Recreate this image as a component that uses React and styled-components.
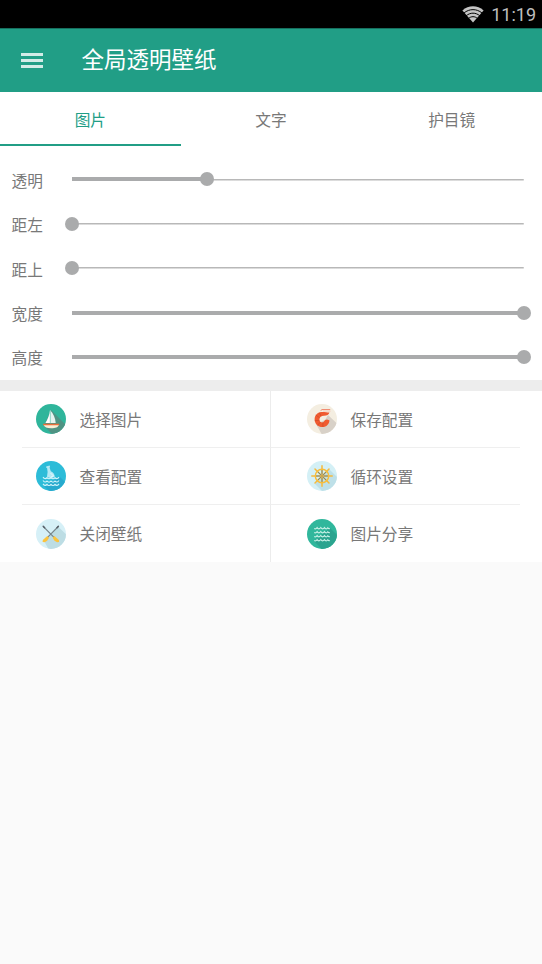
import React from "react"
import styled, { createGlobalStyle } from "styled-components"

const sliders = [
  { label: "透明", value: 30 },
  { label: "距左", value: 0 },
  { label: "距上", value: 0 },
  { label: "宽度", value: 100 },
  { label: "高度", value: 100 },
]

const tabs = ["图片", "文字", "护目镜"]

// round badge with the long diagonal shadow clipped to the disc
const Badge = ({ id, color, shadow, shade, children }) => (
  <svg width="30" height="30" viewBox="0 0 30 30">
    <clipPath id={id}>
      <circle cx="15" cy="15" r="15" />
    </clipPath>
    <g clipPath={`url(#${id})`}>
      <rect width="30" height="30" fill={color} />
      <path d={shadow} fill={shade} />
    </g>
    {children}
  </svg>
)

const BoatIcon = () => (
  <Badge id="boat" color="#2fb59b" shade="#4f9383" shadow="M15 6 L34 25 V34 H20 L8 22 Z">
    <path d="M14 6.2 V19 H9.4 C11.8 15 13.4 11 14 6.2Z" fill="#fff" />
    <path d="M14 6 C17.4 9.5 19.3 14 19.7 19 H14Z" fill="#e6f3ef" />
    <path d="M14.3 6 V19.5" stroke="#67c5b2" strokeWidth="0.7" />
    <path d="M7.5 20.5 H23 C22.3 23.3 19.5 24.3 15.2 24.3 C11 24.3 8.3 23.3 7.5 20.5Z" fill="#f8eed5" />
    <rect x="7" y="19.8" width="16.2" height="1.4" rx="0.4" fill="#e96f3b" />
  </Badge>
)

const BottleIcon = () => (
  <Badge id="bottle" color="#2dbcd8" shade="#28aace" shadow="M24 16 L36 28 V36 H19 L8 25Z">
    <path
      d="M10.1 5.4 L13.7 4.5 L14.1 6.1 L13.5 6.6 L14.8 10.2 C17.4 11.1 18.6 13.3 18.8 15.8 C16.4 17.4 13.6 17.4 11 15.8 L11.6 10.9 L11.1 7.1 L10.4 6.9Z"
      fill="#b4e9f5"
    />
    <path d="M14.5 12 L17.5 15 L14.8 16" stroke="#e3f8fc" strokeWidth="1" fill="none" />
    {[16.6, 20, 23.4].map(y => (
      <path
        key={y}
        d={`M7 ${y - 0.5} Q9 ${y + 2.2} 11 ${y} Q13 ${y + 2.2} 15 ${y} Q17 ${y + 2.2} 19 ${y} Q21 ${y + 2.2} 23 ${y - 0.5}`}
        stroke="#d5f5fb"
        strokeWidth="1.1"
        fill="none"
      />
    ))}
  </Badge>
)

const OarsIcon = () => (
  <Badge id="oars" color="#d6f0f7" shade="#bddde4" shadow="M22 7.5 L38 23 V38 H17 L8 22 L15 15Z">
    <path d="M7.3 7.5 L18.5 18.8 M22.3 7.5 L11 18.8" stroke="#77858b" strokeWidth="1.1" />
    <path
      d="M7.2 7.3 L8.6 8.7 M22.4 7.3 L21 8.7"
      stroke="#555d66"
      strokeWidth="1.5"
      strokeLinecap="round"
    />
    <path d="M18.4 17 L22.9 20.9 L23.1 22.9 L21.1 23.2 L18.5 21.8 L16.7 18.7Z" fill="#fbc33d" />
    <path d="M11.3 17 L6.8 20.9 L6.6 22.9 L8.7 23.2 L11.2 21.8 L13 18.7Z" fill="#fbc33d" />
  </Badge>
)

const ShrimpIcon = () => (
  <Badge id="shrimp" color="#f4eee1" shade="#d8d1c8" shadow="M21 11 L36 25 V36 H18 L9 20 L18 16Z">
    <path
      d="M22.4 8.6 C21.8 10.8 20 11.8 17 11.8 C14.2 11.9 12.4 13.4 12.4 15.4 C12.4 17.6 14.2 18.7 16.2 18.3 L18.2 15.9 L20 15.4 L22.4 16.2 C22.4 20 19.4 23 15.6 23 C10.8 23 7.6 19.7 7.6 15.2 C7.6 10.6 11 7.9 15.4 7.9 C18.2 7.9 20.4 8.1 22.4 8.6Z"
      fill="#f05b30"
    />
    <path
      d="M12.4 8.6 L14 12.2 M8.8 11 L12.6 13.8 M7.8 16.6 L12.4 16.4 M10.6 21.4 L13.4 18 M15.8 22.8 L16 18.4"
      stroke="#cf4a28"
      strokeWidth="0.7"
    />
    <path d="M13.6 6.6 L15 5.6 H23.2" stroke="#f0785a" strokeWidth="0.9" fill="none" />
    <path d="M16 7.2 H23.6" stroke="#f7c8b6" strokeWidth="0.8" />
  </Badge>
)

const WheelIcon = () => (
  <Badge id="wheel" color="#d4f0f6" shade="#bee0e8" shadow="M22 8 L38 24 V38 H23 L8 23Z">
    <path
      d="M15 4.8 V25.2 M4.8 15 H25.2 M8 8 L22 22 M22 8 L8 22"
      stroke="#f5b93c"
      strokeWidth="1.5"
      strokeLinecap="round"
    />
    <path
      d="M15 9 V21 M9 15 H21 M10.8 10.8 L19.2 19.2 M19.2 10.8 L10.8 19.2"
      stroke="#71878d"
      strokeWidth="1"
    />
    <circle cx="15" cy="15" r="6.7" stroke="#f8bd3b" strokeWidth="1.4" fill="none" />
    <circle cx="15" cy="15" r="1.7" fill="#f4bd47" />
    <circle cx="15" cy="15" r="0.7" fill="#7b7a68" />
  </Badge>
)

const WavesIcon = () => (
  <Badge id="waves" color="#30b79c" shade="#2ba48f" shadow="M23 9 L38 24 V38 H22 L7 22Z">
    {[9, 13, 17, 21].map(y => (
      <path
        key={y}
        d={`M7.2 ${y + 0.5} Q8.9 ${y + 1.6} 10.1 ${y - 0.5} Q11.7 ${y + 2.2} 13.8 ${y - 0.5} Q15.5 ${y + 2.2} 17.5 ${y - 0.5} Q19.1 ${y + 2.2} 20.8 ${y - 0.3} Q21.5 ${y + 1} 22.8 ${y + 0.5}`}
        stroke="#c9f1e7"
        strokeWidth="1.1"
        fill="none"
      />
    ))}
  </Badge>
)

const WifiIcon = () => (
  <svg width="22" height="17" viewBox="0 0 22 17">
    <path d="M0.4 4.4 C6.6 -1 15.4 -1 21.6 4.4 L11 16.4Z" fill="#c4c4c4" />
    <path
      d="M2 7 C7.3 2.5 14.7 2.5 20 7 M4.2 9.8 C8.2 6.3 13.8 6.3 17.8 9.8 M6.5 12.4 C9.3 10.1 12.7 10.1 15.5 12.4"
      stroke="#000"
      strokeWidth="1"
      fill="none"
    />
  </svg>
)

const actions = [
  { label: "选择图片", Icon: BoatIcon },
  { label: "保存配置", Icon: ShrimpIcon },
  { label: "查看配置", Icon: BottleIcon },
  { label: "循环设置", Icon: WheelIcon },
  { label: "关闭壁纸", Icon: OarsIcon },
  { label: "图片分享", Icon: WavesIcon },
]

const App = () => (
  <>
    <GlobalStyle />
    <StatusBar>
      <WifiIcon />
      <Clock>11:19</Clock>
    </StatusBar>
    <Header>
      <MenuButton aria-label="menu">
        <span />
        <span />
        <span />
      </MenuButton>
      <h1>全局透明壁纸</h1>
    </Header>
    <Tabs>
      {tabs.map((tab, index) => (
        <Tab key={tab} $active={index === 0}>
          {tab}
        </Tab>
      ))}
    </Tabs>
    <Sliders>
      {sliders.map(({ label, value }) => (
        <SliderRow key={label}>
          <SliderLabel>{label}</SliderLabel>
          <Track>
            <Fill style={{ width: `${value}%` }} />
            <Thumb style={{ left: `${value}%` }} />
          </Track>
        </SliderRow>
      ))}
    </Sliders>
    <Divider />
    <Actions>
      {actions.map(({ label, Icon }) => (
        <Action key={label}>
          <Icon />
          <span>{label}</span>
        </Action>
      ))}
    </Actions>
  </>
)

const GlobalStyle = createGlobalStyle`
  * {
    box-sizing: border-box;
  }

  body {
    margin: 0;
    min-height: 100vh;
    background: #fafafa;
    color: #787878;
    font-family: Roboto, "Noto Sans CJK SC", sans-serif;
    font-size: 15.7px;
  }

  button {
    border: 0;
    padding: 0;
    background: none;
    color: inherit;
    font: inherit;
  }

  svg {
    display: block;
    flex-shrink: 0;
  }
`

const StatusBar = styled.div`
  display: flex;
  align-items: center;
  justify-content: flex-end;
  height: 28px;
  padding-right: 6px;
  background: #000;
`

const Clock = styled.span`
  margin-left: 7px;
  padding-top: 2px;
  color: #bebebe;
  font-size: 18px;
  line-height: 26px;
`

const Header = styled.header`
  display: flex;
  align-items: center;
  height: 64px;
  padding: 0 21px;
  border-top: 1px solid #16705f;
  background: #219e86;
  color: #fff;

  h1 {
    margin: 0 0 2px 39px;
    font-size: 22.5px;
    font-weight: 400;
    line-height: 32px;
  }
`

const MenuButton = styled.button`
  display: flex;
  flex-direction: column;
  gap: 3.3px;
  width: 21.5px;

  span {
    height: 3px;
    background: #d3ece7;
  }
`

const Tabs = styled.nav`
  display: grid;
  grid-template-columns: repeat(3, 1fr);
  height: 54px;
  background: #fff;
`

const Tab = styled.button`
  padding-top: 2px;
  border-bottom: 2px solid ${({ $active }) => ($active ? "#219e86" : "transparent")};
  color: ${({ $active }) => ($active ? "#219e86" : "inherit")};
`

const Sliders = styled.section`
  height: 233.5px;
  padding: 11.3px 18.5px 0 11.5px;
  background: #fff;
`

const SliderRow = styled.div`
  display: flex;
  align-items: center;
  height: 44.35px;
`

const SliderLabel = styled.label`
  width: 60.5px;
  padding-top: 2px;
`

const Track = styled.div`
  position: relative;
  display: flex;
  align-items: center;
  flex: 1;
  height: 14px;
  background: linear-gradient(#b8b8b8, #b8b8b8) center / 100% 1.5px no-repeat;
`

const Fill = styled.div`
  height: 4px;
  background: #aaabac;
`

const Thumb = styled.span`
  position: absolute;
  top: 0;
  width: 14px;
  height: 14px;
  margin-left: -7px;
  border-radius: 50%;
  background: #aaabac;
`

const Divider = styled.div`
  height: 11.5px;
  background: #ededed;
`

const Actions = styled.section`
  display: grid;
  grid-template-columns: 1fr 1fr;
  grid-template-rows: repeat(3, 57px);
  padding: 0 22px;
  background: #fff;
`

const Action = styled.button`
  display: flex;
  align-items: center;
  gap: 13.5px;
  padding-left: 14px;
  border-bottom: 1px solid #efefef;
  text-align: left;

  &:nth-child(odd) {
    border-right: 1px solid #ececec;
  }

  &:nth-child(even) {
    padding-left: 36px;
  }

  &:nth-last-child(-n + 2) {
    border-bottom: 0;
  }
`

export default App
